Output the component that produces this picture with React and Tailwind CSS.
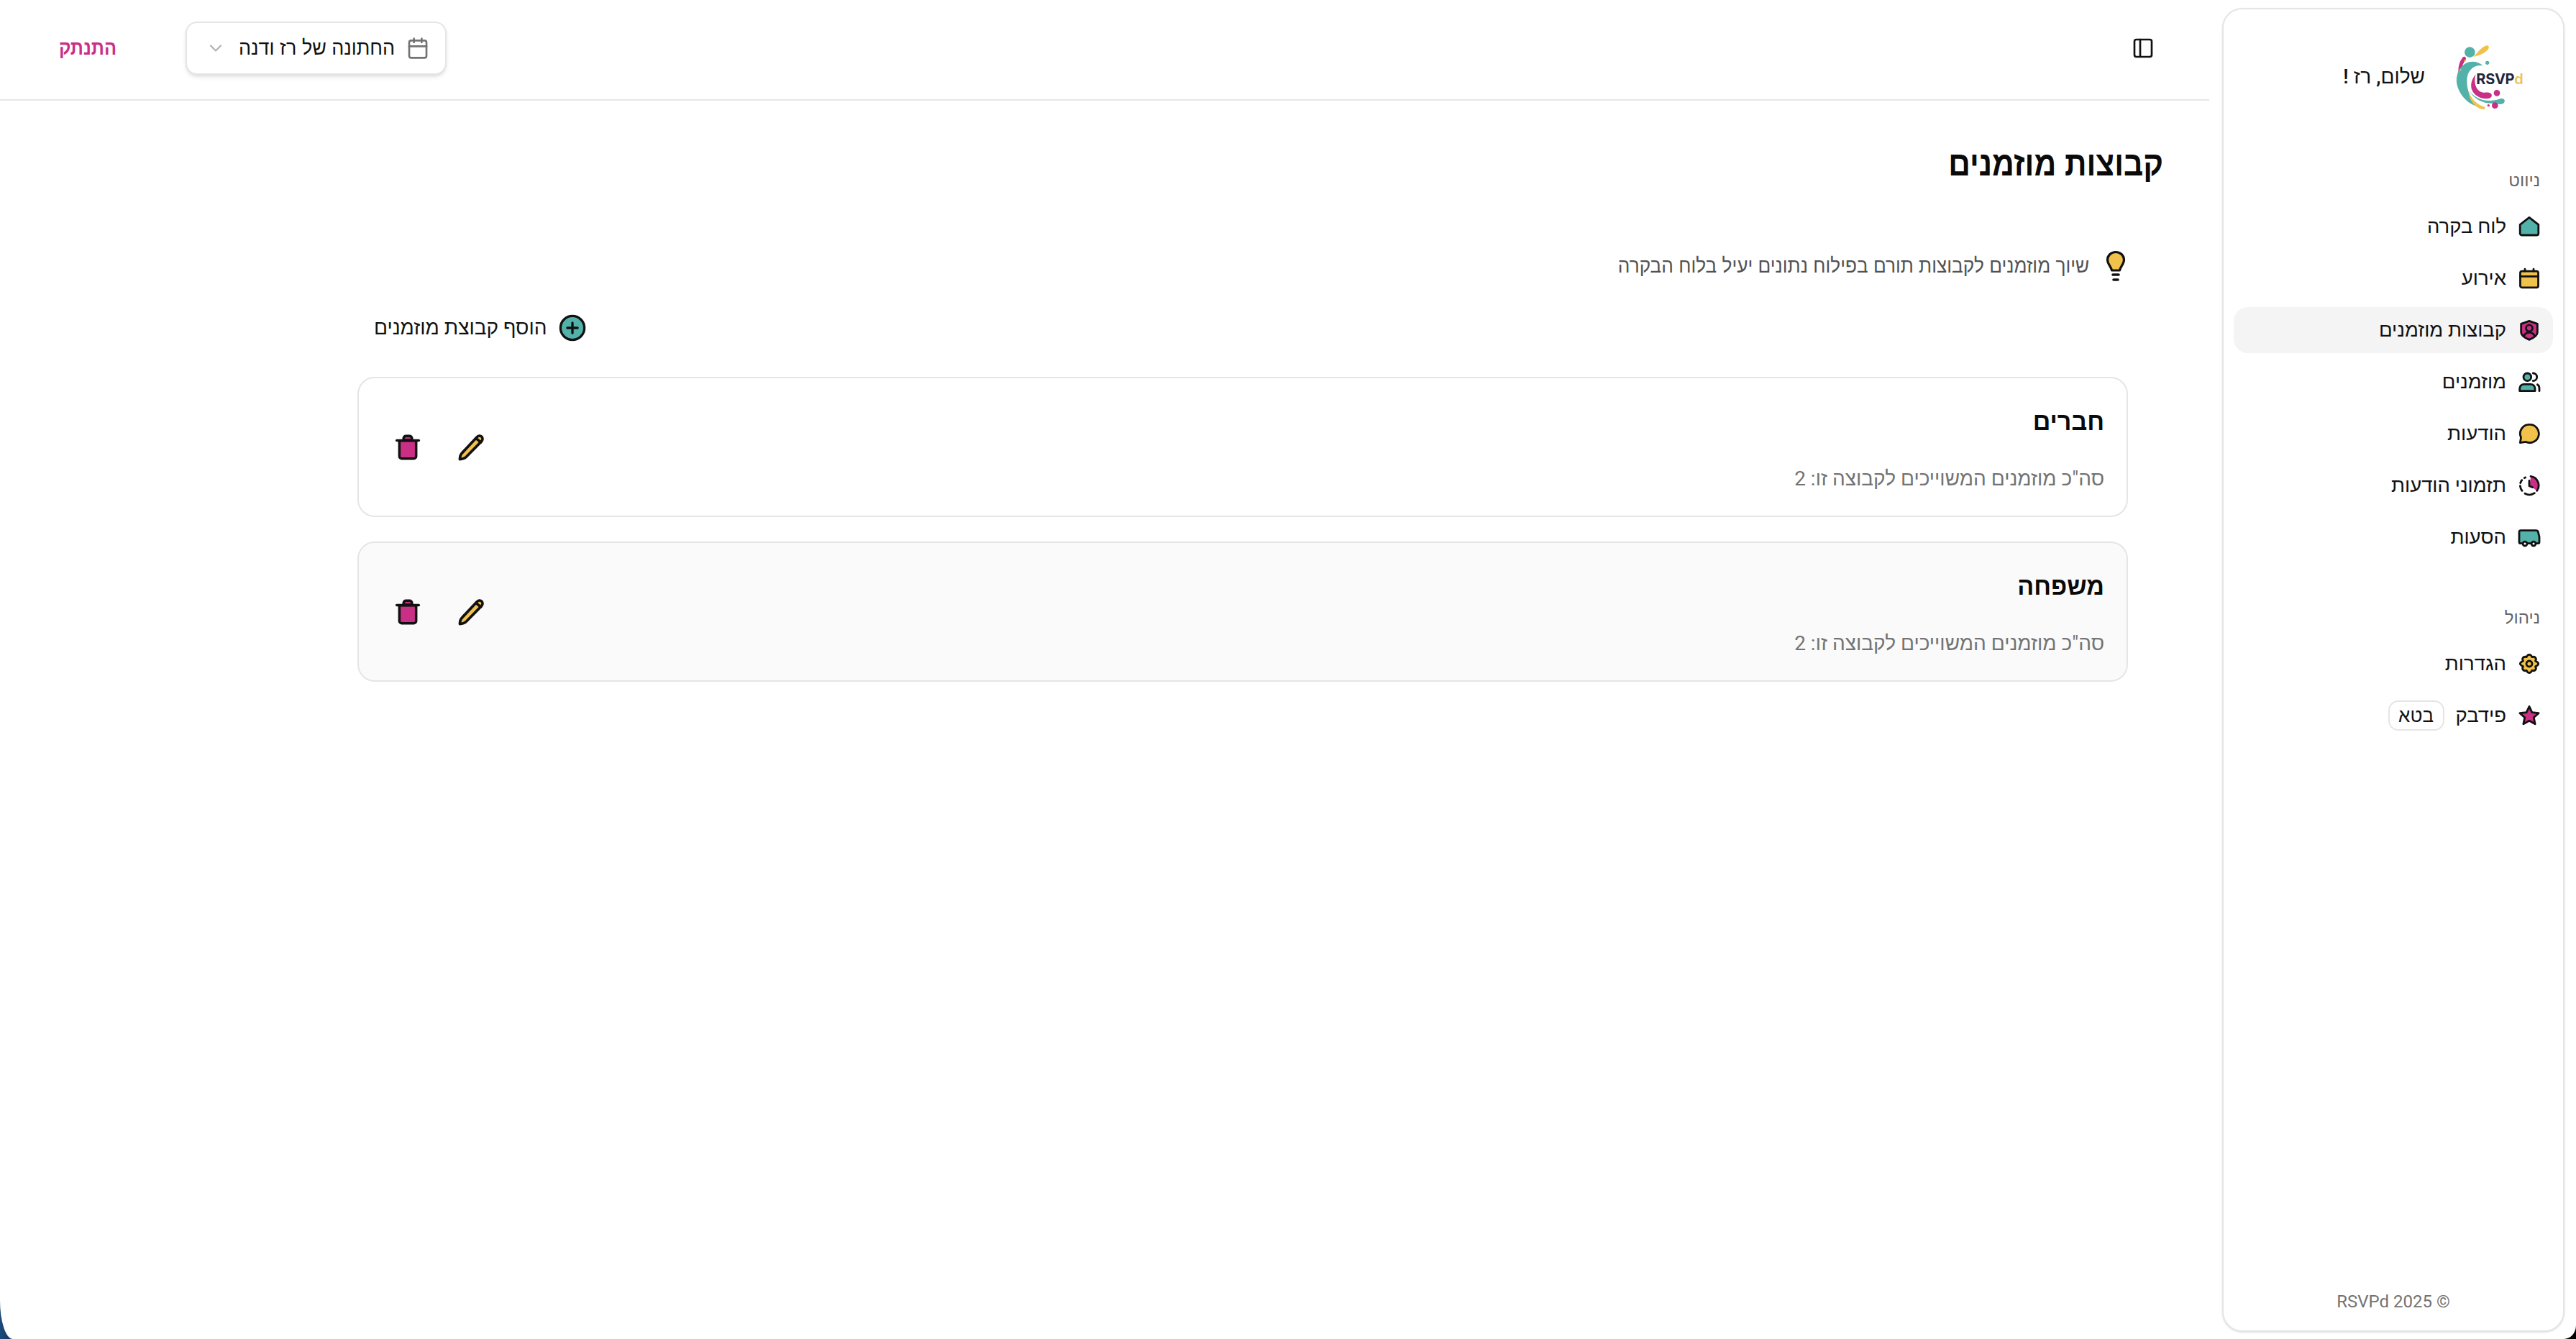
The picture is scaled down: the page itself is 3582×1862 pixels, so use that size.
import { Calendar, ChevronDown, PanelLeft } from 'lucide-react';

const TEAL = '#52b2aa';
const YELLOW = '#f0c24b';
const PINK = '#c92f85';

function Icon({ className = 'w-8 h-8', children }) {
  return (
    <svg viewBox="0 0 24 24" className={`shrink-0 ${className}`} fill="none" stroke="#111" strokeWidth="2.1" strokeLinecap="round" strokeLinejoin="round">
      {children}
    </svg>
  );
}

const HomeIcon = () => (
  <Icon><path d="M12 2.600 21.600 10v9.400a1.600 1.600 0 0 1-1.600 1.600H4a1.600 1.600 0 0 1-1.600-1.600V10Z" fill={TEAL} /></Icon>
);
const EventIcon = () => (
  <Icon>
    <rect x="2.600" y="4.600" width="18.800" height="17" rx="1.800" fill={YELLOW} />
    <path d="M2.600 10h18.800M7.500 2.400v2.200M16.500 2.400v2.200" />
  </Icon>
);
const GroupIcon = () => (
  <Icon>
    <path d="M12 2.500 20.500 5.500v9c0 3.500-4 5.800-8.500 7.500-4.500-1.700-8.500-4-8.500-7.500v-9Z" fill={PINK} />
    <circle cx="12" cy="10" r="3.400" />
    <path d="M6.500 18c1-2.500 3-3.500 5.500-3.500s4.500 1 5.500 3.500" />
  </Icon>
);
const GuestsIcon = () => (
  <Icon>
    <circle cx="10" cy="7" r="4" fill={TEAL} />
    <path d="M2 21.500v-2.500a4.500 4.500 0 0 1 4.500-4.500h7A4.500 4.500 0 0 1 18 19v2.500Z" fill={TEAL} />
    <path d="M16 3a4 4 0 0 1 0 8M20.500 14.800a4.500 4.500 0 0 1 2 3.700v3" />
  </Icon>
);
const ChatIcon = () => (
  <Icon><path d="M12.500 2.500a9.500 9.500 0 1 1-4 18.100L2.500 21.500l.9-5.500a9.500 9.500 0 0 1 9.100-13.500Z" fill={YELLOW} /></Icon>
);
const ScheduleIcon = () => (
  <Icon>
    <path d="M13.500 2.600a9.500 9.500 0 0 1 6.500 15L12.500 12Z" fill={PINK} stroke="none" />
    <path d="M13.500 2.600a9.500 9.500 0 0 1 6.500 15M17.500 20a9.500 9.500 0 0 1-10 .5M4.500 17.500a9.500 9.500 0 0 1-2-5M2.800 9.500a9.500 9.500 0 0 1 1.500-3M7 4.200l1-.5" />
    <path d="M12 7v5.500l3.500 1.500" />
  </Icon>
);
const BusIcon = () => (
  <Icon>
    <path d="M3.500 5h15.500c1.200 0 2 .6 2.300 1.600l1.200 5v5.400a1.500 1.500 0 0 1-1.500 1.500h-18a1.500 1.500 0 0 1-1.500-1.500V6.500A1.500 1.500 0 0 1 3.500 5Z" fill={TEAL} />
    <circle cx="7.500" cy="18.800" r="2.200" fill="#fff" />
    <circle cx="16.500" cy="18.800" r="2.200" fill="#fff" />
  </Icon>
);
const GearIcon = () => (
  <Icon>
    <path d="M12 2.500c1.400 0 2.200 1 2.800 2.400 1.400-.4 2.800-.4 3.700.8.900 1.200.6 2.400-.1 3.500 1.500.6 3.100 1.300 3.100 2.800s-1.600 2.200-3.100 2.800c.7 1.100 1 2.300.1 3.500-.9 1.200-2.300 1.200-3.700.8-.6 1.400-1.400 2.400-2.800 2.400s-2.200-1-2.800-2.400c-1.400.4-2.800.4-3.700-.8-.9-1.200-.6-2.400.1-3.500C4.100 14 2.500 13.300 2.500 12s1.600-2.200 3.100-2.800c-.7-1.100-1-2.300-.1-3.500.9-1.200 2.300-1.200 3.700-.8.600-1.400 1.400-2.400 2.800-2.400Z" fill={YELLOW} />
    <circle cx="12" cy="12" r="3" fill={YELLOW} />
  </Icon>
);
const StarIcon = () => (
  <Icon><path d="m12 2.500 2.900 6.200 6.900.8-5.100 4.600 1.400 6.800-6.100-3.400-6.100 3.400 1.400-6.800-5.100-4.600 6.900-.8Z" fill={PINK} /></Icon>
);
const PlusIcon = () => (
  <Icon className="w-[38px] h-[38px]">
    <circle cx="12" cy="12" r="10.500" fill={TEAL} />
    <path d="M12 7.500v9M7.500 12h9" />
  </Icon>
);
const PencilIcon = () => (
  <Icon className="w-[42px] h-[42px]">
    <path d="M2.500 21.500c.1-2.200.6-3.800 1.800-5L16 4c1.200-1.200 2.800-1.500 3.900-.4 1.100 1.100.8 2.700-.4 3.900L7.500 19.700c-1.200 1.200-2.800 1.700-5 1.800Z" fill={YELLOW} />
    <path d="m15.300 4.800 3.900 3.300" />
  </Icon>
);
const TrashIcon = () => (
  <Icon className="w-[40px] h-[40px]">
    <path d="M5 6.500h14v13a2 2 0 0 1-2 2H7a2 2 0 0 1-2-2Z" fill={PINK} />
    <path d="M8.500 6V4.500a2 2 0 0 1 2-2h3a2 2 0 0 1 2 2V6Z" fill={PINK} />
    <path d="M2.800 6.300h18.400" />
  </Icon>
);
const BulbIcon = () => (
  <svg viewBox="0 0 30 44" className="w-[30px] h-[44px] shrink-0" fill="none" stroke="#111" strokeWidth="3.200" strokeLinecap="round" strokeLinejoin="round">
    <path d="M15 2.500c6.800 0 11.500 5 11.500 11 0 5.500-5 9-6 14.500h-11c-1-5.500-6-9-6-14.500 0-6 4.700-11 11.500-11Z" fill={YELLOW} />
    <path d="M11 34h8M12 41h6" strokeWidth="3.600" />
  </svg>
);

function Logo() {
  return (
    <svg viewBox="0 0 480 390" className="w-[160px] h-[130px] shrink-0">
      <circle cx="163" cy="98" r="22" fill={TEAL} />
      <path d="M178 118c18-18 30-40 54-48 12-2 14 10 4 20-16 16-40 22-58 28Z" fill={YELLOW} />
      <path d="M135 118c-26 30-34 90 26 152-40-58-42-104-16-140 6-8-2-18-10-12Z" fill={PINK} />
      <path d="M218 154c-34-32-100-20-110 50-6 50 38 112 92 120-30-22-54-70-48-120 4-32 30-56 66-50Z" fill={TEAL} />
      <path d="M188 190c-26 30-28 70 8 92 20 12 52 14 58 0 4-14-12-18-28-16-34 4-50-40-38-76Z" fill={PINK} />
      <path d="M158 262c2 38 30 72 62 74 10 0 6-10 0-12-26-6-50-30-62-62Z" fill={YELLOW} />
      <path d="M160 258c30 40 80 52 130 34 16-6 26 10 12 20-10 6-22 2-30-2-44 6-86-10-112-52Z" fill={TEAL} />
      <circle cx="276" cy="268" r="13" fill={PINK} />
      <circle cx="236" cy="142" r="8" fill={TEAL} />
      <circle cx="268" cy="320" r="13" fill={PINK} />
      <circle cx="241" cy="320" r="5" fill={PINK} />
      <circle cx="143" cy="133" r="3.500" fill={YELLOW} />
      <circle cx="124" cy="171" r="3.500" fill={YELLOW} />
      <text x="190" y="231" direction="ltr" fontFamily="Inter, sans-serif" fontWeight="700" fontSize="60" letterSpacing="-1" fill="#23263a">
        RSVP<tspan fontWeight="600" fill={YELLOW}>d</tspan>
      </text>
    </svg>
  );
}

function NavItem({ icon, label, active, badge }) {
  return (
    <div className={`flex items-center h-16 pr-[17px] gap-[16px] rounded-[20px] ${active ? 'bg-[#f4f4f5]' : ''}`}>
      {icon}
      <span className="text-[27.5px] text-[#111]">{label}</span>
      {badge && (
        <span className="flex items-center justify-center w-[78px] h-[42px] rounded-[14px] border-2 border-[#e5e5e5] text-[26px] font-medium text-[#111]">{badge}</span>
      )}
    </div>
  );
}

function Sidebar() {
  const nav = [
    { icon: <HomeIcon />, label: 'לוח בקרה' },
    { icon: <EventIcon />, label: 'אירוע' },
    { icon: <GroupIcon />, label: 'קבוצות מוזמנים', active: true },
    { icon: <GuestsIcon />, label: 'מוזמנים' },
    { icon: <ChatIcon />, label: 'הודעות' },
    { icon: <ScheduleIcon />, label: 'תזמוני הודעות' },
    { icon: <BusIcon />, label: 'הסעות' },
  ];
  return (
    <aside className="w-[476px] h-[1841px] mt-[11px] mr-[16px] ml-[18px] shrink-0 flex flex-col rounded-[28px] border-2 border-[#e5e5e5] bg-white shadow-sm px-[14px]">
      <div className="flex items-center gap-2 mt-[27px] h-[130px] pr-[10px]">
        <Logo />
        <span className="text-[28px] font-medium text-[#111] mt-[3px]">שלום, רז !</span>
      </div>
      <div className="mt-[61px] h-10 flex items-center pr-[18px] text-[24px] font-medium text-[#666]">ניווט</div>
      <div className="mt-3 flex flex-col gap-2">
        {nav.map((item) => (
          <NavItem key={item.label} {...item} />
        ))}
      </div>
      <div className="mt-[60px] h-10 flex items-center pr-[18px] text-[24px] font-medium text-[#666]">ניהול</div>
      <div className="mt-3 flex flex-col gap-2">
        <NavItem icon={<GearIcon />} label="הגדרות" />
        <NavItem icon={<StarIcon />} label="פידבק" badge="בטא" />
      </div>
      <div dir="ltr" className="mt-auto pb-[22px] text-center text-[24px] text-[#737373]">RSVPd 2025 ©</div>
    </aside>
  );
}

function GroupCard({ name, count, muted }) {
  return (
    <div className={`flex items-center justify-between h-[195px] rounded-[24px] border-2 border-[#e5e5e5] pr-[31px] pl-[48px] ${muted ? 'bg-[#fafafa]' : 'bg-white'}`}>
      <div className="flex flex-col gap-[40px] pt-[8px]">
        <h3 className="text-[34px] leading-[40px] font-semibold text-[#0a0a0a]">{name}</h3>
        <p className="text-[28px] leading-[40px] text-[#737373]">סה"כ מוזמנים המשוייכים לקבוצה זו: {count}</p>
      </div>
      <div className="flex items-center gap-[48px]">
        <PencilIcon />
        <TrashIcon />
      </div>
    </div>
  );
}

export default function App() {
  return (
    <div dir="rtl" className="h-screen w-full overflow-hidden bg-[linear-gradient(90deg,#1d4a7c_0%,#10202c_1%,#000_100%)] font-['Roboto','Noto_Sans',sans-serif]">
      <div className="flex h-full w-full bg-white rounded-bl-[18px_54px] rounded-br-[17px_19px]">
        <Sidebar />
        <main className="flex-1 min-w-0 flex flex-col">
          <header className="h-[140px] shrink-0 flex items-center justify-between border-b-2 border-[#e5e5e5] pb-[4px] pr-[76px] pl-[82px]">
            <PanelLeft className="w-8 h-8 text-[#111]" strokeWidth={2} />
            <div className="flex items-center gap-[96px]">
              <div className="flex items-center w-[363px] h-[74px] rounded-[16px] border-2 border-[#e5e5e5] bg-white shadow-md pr-[22px] pl-[26px]">
                <Calendar className="w-8 h-8 text-[#737373]" strokeWidth={2} />
                <span className="inline-block origin-right scale-x-[.96] mr-[16px] text-[28px] text-[#111] font-['Liberation_Sans',sans-serif]">החתונה של רז ודנה</span>
                <ChevronDown className="mr-auto w-7 h-7 text-[#b3b3b3]" strokeWidth={2} />
              </div>
              <button className="w-[80px] whitespace-nowrap text-[28px] font-bold text-[#c92f85] font-['Liberation_Sans',sans-serif]">
                <span className="inline-block origin-right scale-x-[.9]">התנתק</span>
              </button>
            </div>
          </header>
          <div className="pr-[64px] pt-[58px]">
            <h1 className="origin-right scale-x-[.885] text-[48px] leading-[60px] font-bold text-[#0a0a0a] font-['Liberation_Sans',sans-serif]">קבוצות מוזמנים</h1>
          </div>
          <div className="mr-[113px] ml-[497px] mt-[90px]">
            <div className="flex items-center gap-[22px] h-[44px] pr-[2px] text-[28px] text-[#525252] font-['Liberation_Sans',sans-serif]">
              <BulbIcon />
              <span className="inline-block origin-right scale-x-[.936]">שיוך מוזמנים לקבוצות תורם בפילוח נתונים יעיל בלוח הבקרה</span>
            </div>
            <div className="flex justify-end mt-[42px]">
              <button className="flex items-center gap-[17px] h-[44px] ml-[23px] text-[28px] font-medium text-[#111]">
                <PlusIcon />
                <span>הוסף קבוצת מוזמנים</span>
              </button>
            </div>
            <div className="mt-[46px] flex flex-col gap-[34px]">
              <GroupCard name="חברים" count={2} />
              <GroupCard name="משפחה" count={2} muted />
            </div>
          </div>
        </main>
      </div>
    </div>
  );
}
